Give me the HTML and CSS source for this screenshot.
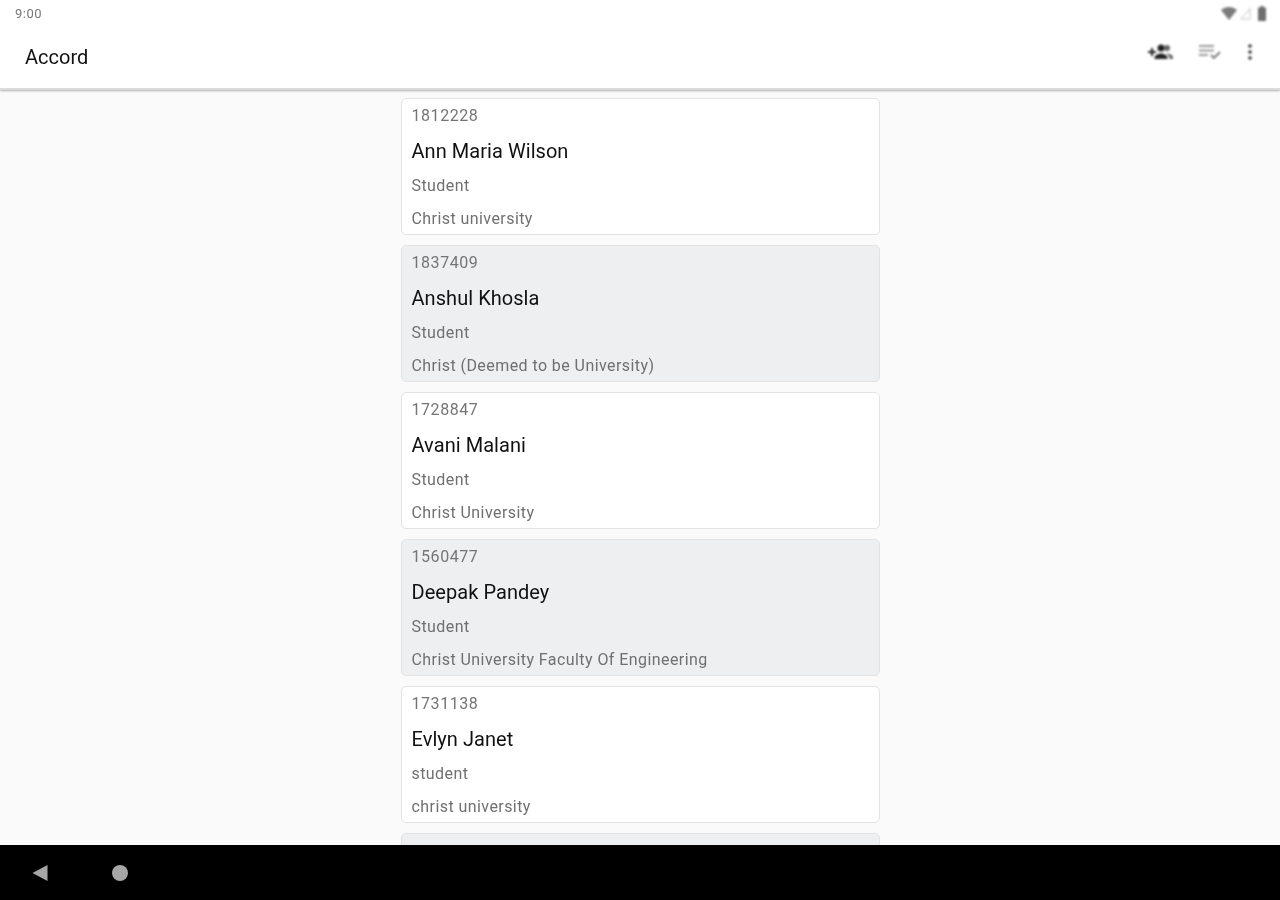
FILE: index.html
```html
<!DOCTYPE html>
<html>
<head>
    <title>Accord</title>
    <link rel="stylesheet" href="styles.css">
</head>
<body>
    <div class="screen">
        <div class="header">
            <div class="status-bar">
                <span class="clock">9:00</span>
                <div class="status-icons">
                    <svg width="16" height="13" viewBox="0 0 16 13"><path d="M0 3C4.500-1 11.500-1 16 3L8 13z" fill="#7c7c7c"/></svg>
                    <svg width="11" height="13" viewBox="0 0 11 13"><path d="M10 1.500V12H1z" fill="none" stroke="#c4c4c4" stroke-width="1"/></svg>
                    <svg class="battery" width="8" height="15" viewBox="0 0 8 15"><path d="M2.500 0h3v1.500H7.500q.5 0 .5.500V14.500q0 .5-.5.500H.5q-.5 0-.5-.5V2q0-.5.500-.5h2z" fill="#6e6e6e"/></svg>
                </div>
            </div>
            <div class="toolbar">
                <h1 class="app-title">Accord</h1>
                <div class="actions">
                    <svg class="icon-add" width="26" height="18" viewBox="0 0 26 18">
                        <path d="M0 8h3V5h2v3h3v2H5v3H3v-3H0z" fill="#222"/>
                        <circle cx="13" cy="5" r="3.500" fill="#222"/>
                        <path d="M6.500 15c0-3 4-4.500 6.500-4.500s6.500 1.500 6.500 4.500v1h-13z" fill="#222"/>
                        <circle cx="19" cy="5" r="3" fill="#666"/>
                        <path d="M18 10.500c3 0 7 1 7 4v1.500h-3.500c0-2.500-1.500-4.200-3.500-5.500z" fill="#666"/>
                    </svg>
                    <svg class="icon-list" width="23" height="16" viewBox="0 0 23 16">
                        <path d="M0 1h15v2H0zM0 5.500h15v2H0zM0 10h9v2H0z" fill="#9a9a9a"/>
                        <path d="M12 11l3 3 6-6" fill="none" stroke="#777" stroke-width="1.800"/>
                    </svg>
                    <svg class="icon-more" width="6" height="16" viewBox="0 0 6 16">
                        <circle cx="3" cy="2" r="1.800" fill="#333"/>
                        <circle cx="3" cy="8" r="1.800" fill="#333"/>
                        <circle cx="3" cy="14" r="1.800" fill="#333"/>
                    </svg>
                </div>
            </div>
        </div>

        <div class="list">
            <div class="card">
                <div class="card-id">1812228</div>
                <div class="card-name">Ann Maria Wilson</div>
                <div class="card-line">Student</div>
                <div class="card-line">Christ university</div>
            </div>
            <div class="card shaded">
                <div class="card-id">1837409</div>
                <div class="card-name">Anshul Khosla</div>
                <div class="card-line">Student</div>
                <div class="card-line">Christ (Deemed to be University)</div>
            </div>
            <div class="card">
                <div class="card-id">1728847</div>
                <div class="card-name">Avani Malani</div>
                <div class="card-line">Student</div>
                <div class="card-line">Christ University</div>
            </div>
            <div class="card shaded">
                <div class="card-id">1560477</div>
                <div class="card-name">Deepak Pandey</div>
                <div class="card-line">Student</div>
                <div class="card-line">Christ University Faculty Of Engineering</div>
            </div>
            <div class="card">
                <div class="card-id">1731138</div>
                <div class="card-name">Evlyn Janet</div>
                <div class="card-line">student</div>
                <div class="card-line">christ university</div>
            </div>
            <div class="card shaded"></div>
        </div>

        <div class="nav-bar">
            <svg width="16" height="18" viewBox="0 0 16 18"><path d="M15.500 1v16L.5 9z" fill="#a6a6a6"/></svg>
            <div class="nav-home"></div>
        </div>
    </div>
</body>
</html>
```

FILE: styles.css
```css
html, body {
    margin: 0;
    height: 100%;
}

body {
    background-color: #fafafa;
    font-family: Roboto, "Liberation Sans", sans-serif;
    overflow: hidden;
}

.screen {
    display: flex;
    flex-direction: column;
    height: 900px;
}

.header {
    flex: none;
    height: 88px;
    background-color: #fff;
    box-shadow: 0 1px 2px rgba(0, 0, 0, 0.3);
    border-bottom: 2px solid #dcdcdc;
    box-sizing: content-box;
    position: relative;
    z-index: 1;
}

.status-bar {
    display: flex;
    justify-content: space-between;
    align-items: center;
    height: 26px;
    padding: 0 14px 0 15px;
}

.clock {
    font-size: 13px;
    letter-spacing: 0.5px;
    color: #777;
    filter: blur(0.7px);
}

.status-icons {
    display: flex;
    align-items: center;
    gap: 3px;
    filter: blur(0.8px);
}

.battery {
    margin-left: 4px;
}

.toolbar {
    display: flex;
    justify-content: space-between;
    align-items: center;
    height: 62px;
    padding: 0 25px;
}

.app-title {
    margin: 0;
    font-size: 20px;
    font-weight: 400;
    color: #111;
    filter: blur(0.7px);
}

.actions {
    display: flex;
    align-items: center;
    margin-top: -10px;
    margin-right: 2px;
    filter: blur(0.8px);
}

.icon-list {
    margin-left: 25px;
}

.icon-more {
    margin-left: 25px;
}

.list {
    flex: 1;
    overflow: hidden;
    display: flex;
    flex-direction: column;
    align-items: center;
    gap: 10px;
    padding-top: 8px;
}

.card {
    flex: none;
    box-sizing: border-box;
    width: 479px;
    height: 137px;
    padding: 7px 9px 0 10px;
    background-color: #fff;
    border: 1px solid #e2e2e2;
    border-radius: 5px;
    filter: blur(0.7px);
}

.card.shaded {
    background-color: #eeeff1;
}

.card-id {
    height: 20px;
    line-height: 20px;
    font-size: 16px;
    letter-spacing: 0.55px;
    color: #757575;
}

.card-name {
    height: 50px;
    line-height: 50px;
    font-size: 20px;
    letter-spacing: 0.05px;
    color: #111;
}

.card-line {
    height: 33px;
    line-height: 20px;
    font-size: 16px;
    letter-spacing: 0.43px;
    color: #707070;
}

.nav-bar {
    flex: none;
    display: flex;
    align-items: center;
    gap: 64px;
    height: 55px;
    padding-left: 32px;
    background-color: #000;
    position: relative;
    z-index: 2;
}

.nav-home {
    width: 16px;
    height: 16px;
    border-radius: 50%;
    background-color: #a6a6a6;
}
```
